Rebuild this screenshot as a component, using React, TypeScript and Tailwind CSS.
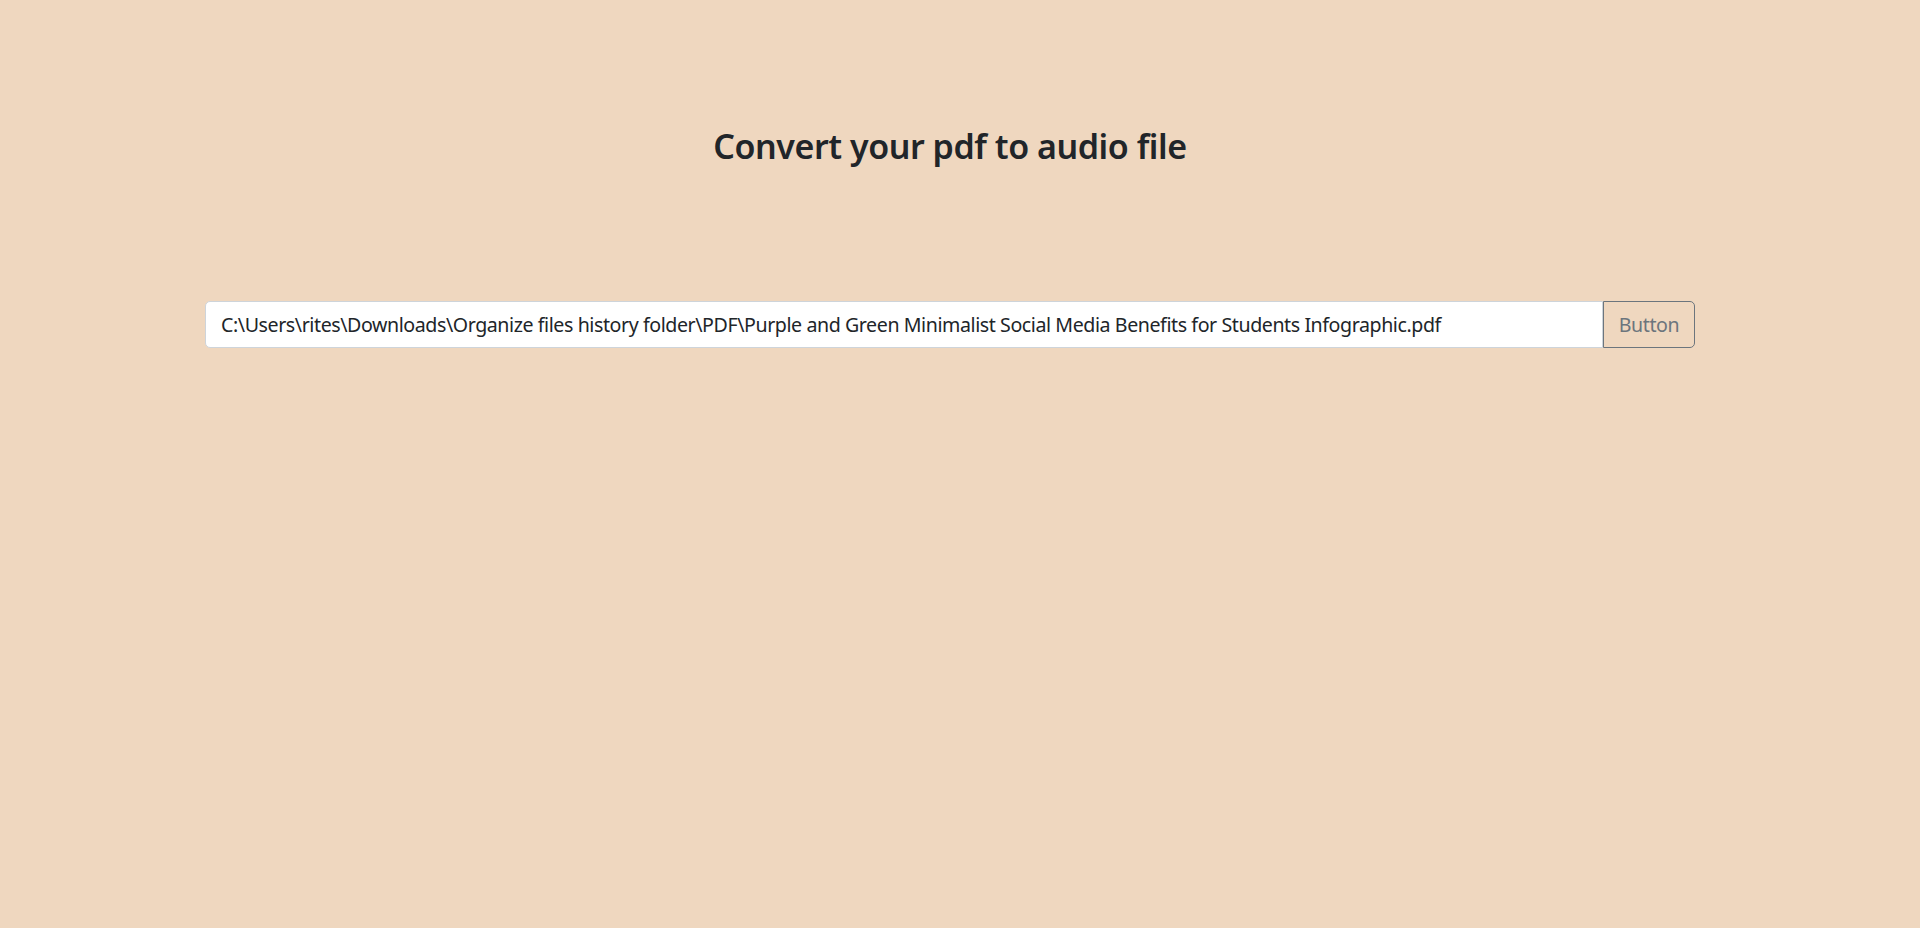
import React from "react";

export default function App() {
  return (
    <div className="min-h-[928px] w-full bg-[#efd7bf] font-['Noto_Sans',sans-serif] text-[#212529]">
      <div className="flex justify-center pr-[20px] pt-[126px]">
        <h3 className="text-[34px] font-semibold leading-[41px] tracking-[-0.45px]">Convert your pdf to audio file</h3>
      </div>
      <div className="ml-[205px] mt-[134px] flex w-[1490px]">
        <div className="flex h-[47px] flex-1 items-center rounded-l-[5px] border border-[#ced4da] bg-white pl-[15px] text-[19.6px] tracking-[-0.42px]">
          C:\Users\rites\Downloads\Organize files history folder\PDF\Purple and Green Minimalist Social Media Benefits for Students Infographic.pdf
        </div>
        <button className="flex h-[47px] w-[92px] items-center justify-center rounded-r-[5px] border border-[#6c757d] text-[19.6px] tracking-[-0.4px] text-[#6c757d]">
          Button
        </button>
      </div>
    </div>
  );
}
